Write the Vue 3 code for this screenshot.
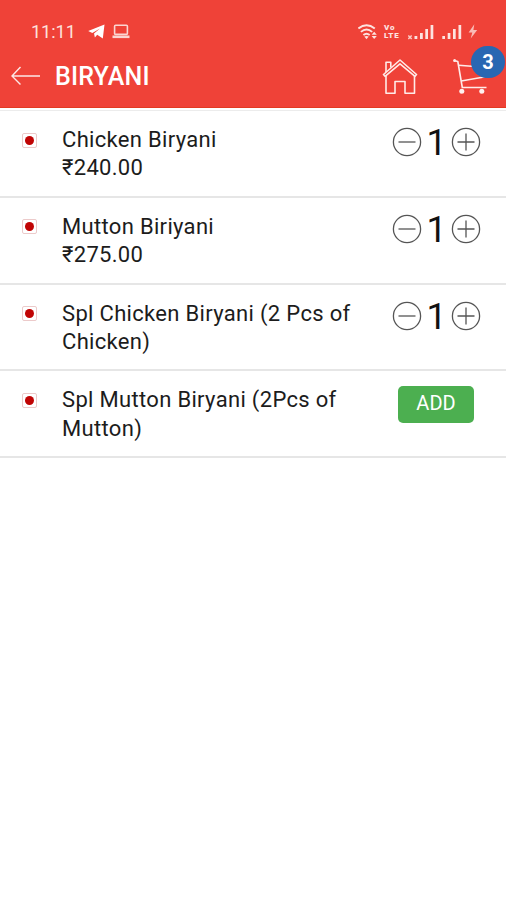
<script setup>
import { ref } from 'vue'

const items = ref([
  { name: 'Chicken Biryani', price: '₹240.00', qty: 1 },
  { name: 'Mutton Biriyani', price: '₹275.00', qty: 1 },
  { name: 'Spl Chicken Biryani (2 Pcs of Chicken)', price: '', qty: 1 },
  { name: 'Spl Mutton Biryani (2Pcs of Mutton)', price: '', qty: 0 },
])
</script>

<template>
  <div class="screen">
    <header class="header">
      <div class="status">
        <span class="time">11:11</span>
        <svg class="plane" width="18" height="15" viewBox="0 0 18 15">
          <path d="M.2 7 16.5 .5 14.8 14.5 9.2 10.8 6.9 13.4 6 9.6 12 4.5 4.3 9Z" fill="#fff" />
        </svg>
        <svg class="laptop" width="18" height="15" viewBox="0 0 18 15">
          <rect x="2.6" y="1.2" width="12.8" height="9.2" rx="1" fill="none" stroke="#fbd5d1" stroke-width="1.6" />
          <path d="M.5 12.8H17.5" stroke="#fbd5d1" stroke-width="2.6" />
        </svg>
        <span class="spacer"></span>
        <svg class="wifi" width="20" height="16" viewBox="0 0 20 16">
          <g fill="none" stroke="#fde3e0" stroke-width="1.9">
            <path d="M.4 4.5Q8.5 -2 16.8 4.5" />
            <path d="M2.9 7.9Q8.5 3 14.2 7.9" />
            <path d="M5.4 11.1Q8.5 8.5 11.7 11.1" />
          </g>
          <path d="M6.3 12.6Q8.5 11.2 10.7 12.6L8.5 15.2Z" fill="#fde3e0" />
          <path d="M13.6 10.8 16.2 7.8 18.8 10.8ZM13.6 12 16.2 15 18.8 12Z" fill="#fde3e0" />
        </svg>
        <span class="volte"><span>Vo</span><span>LTE</span></span>
        <svg class="bars" width="26" height="16" viewBox="0 0 26 16">
          <path d="M.3 11.5 3.7 15M3.7 11.5.3 15" stroke="#fbc9c4" stroke-width="1.5" />
          <path d="M6.5 12H9.3V15H6.5ZM12 9H14.8V15H12ZM17.3 5H20V15H17.3ZM22.6 1H25.3V15H22.6Z" fill="#fde3e0" />
        </svg>
        <svg class="bars2" width="20" height="16" viewBox="0 0 20 16">
          <path d="M.3 12H3V15H.3ZM5.7 9H8.4V15H5.7ZM11 5H13.7V15H11ZM16.5 1H19.2V15H16.5Z" fill="#fde3e0" />
        </svg>
        <svg class="bolt" width="10" height="15" viewBox="0 0 10 15">
          <path d="M6.3.3.6 8.4H4.3L2.7 14.6 9.2 6H5.4Z" fill="#f9bbb5" />
        </svg>
      </div>
      <div class="bar">
        <svg class="back" width="30" height="20" viewBox="0 0 30 20">
          <path d="M9.5 1 1 10 9.5 18.5M1 10H29" fill="none" stroke="#fde8e6" stroke-width="1.4" />
        </svg>
        <h1 class="title">BIRYANI</h1>
        <span class="spacer"></span>
        <svg class="home" width="36" height="36" viewBox="0 0 36 36">
          <g fill="none" stroke="#ffebe8" stroke-width="1.6" stroke-linejoin="round">
            <path d="M1.5 15.5 18 1 34.5 15.5 33 17.3 18 4.8 3 17.3Z" />
            <path d="M4 13V3.2H8.8V8.5" />
            <path d="M4 17V34.2H13V22.5H23V34.2H32.5V17" />
          </g>
        </svg>
        <div class="cart">
          <svg width="36" height="36" viewBox="0 0 36 36">
            <g fill="none" stroke="#ffebe8" stroke-width="1.6" stroke-linejoin="round">
              <path d="M1 1.5 4.8 2.5 9.3 28.5H33.5" />
              <path d="M5.6 6.3 35 8.5 31 18 8.2 22" />
            </g>
            <circle cx="1.6" cy="1.6" r="1.5" fill="#ffebe8" />
            <circle cx="8.8" cy="32.2" r="2.5" fill="#fff0ee" />
            <circle cx="28.8" cy="32.2" r="2.5" fill="#fff0ee" />
          </svg>
          <span class="badge">3</span>
        </div>
      </div>
    </header>

    <main class="list">
      <section v-for="item in items" :key="item.name" class="row">
        <span class="mark"><i></i></span>
        <div class="info">
          <div>{{ item.name }}</div>
          <div v-if="item.price">{{ item.price }}</div>
        </div>
        <div v-if="item.qty" class="stepper">
          <svg width="30" height="30" viewBox="0 0 30 30" @click="item.qty--">
            <circle cx="15" cy="15" r="13.6" />
            <path d="M6.5 15H23.5" />
          </svg>
          <span class="qty">{{ item.qty }}</span>
          <svg width="30" height="30" viewBox="0 0 30 30" @click="item.qty++">
            <circle cx="15" cy="15" r="13.6" />
            <path d="M6.5 15H23.5M15 6.5V23.5" />
          </svg>
        </div>
        <button v-else class="add" @click="item.qty++">ADD</button>
      </section>
    </main>
  </div>
</template>

<style>
body {
  margin: 0;
  background: #fff;
}
</style>

<style scoped>
.screen {
  width: 506px;
  height: 900px;
  overflow: hidden;
  background: #fff;
  font-family: Roboto, "Liberation Sans", sans-serif;
  color: #1c1c1c;
}
svg {
  display: block;
  flex: none;
}
.header {
  box-sizing: border-box;
  height: 108px;
  padding-top: 20px;
  background: #ef4238;
  border-bottom: 1px solid #e23a22;
}
.status {
  display: flex;
  align-items: center;
  height: 23px;
  padding: 0 28px 0 31px;
}
.time {
  width: 57px;
  font-size: 18px;
  line-height: 23px;
  color: #fde0dd;
}
.laptop {
  margin-left: 6px;
}
.spacer {
  flex: 1;
}
.volte {
  display: flex;
  flex-direction: column;
  width: 18px;
  margin: 0 6px;
  font-size: 8px;
  font-weight: 900;
  line-height: 8px;
  letter-spacing: 0.8px;
  color: #fde3e0;
}
.bars2 {
  margin-left: 8px;
}
.bolt {
  margin-left: 6px;
}
.bar {
  display: flex;
  align-items: center;
  height: 67px;
  padding: 0 17px 0 11px;
}
.back {
  margin-bottom: 1px;
}
.title {
  margin: 0 0 0 14px;
  font-size: 25px;
  font-weight: 500;
  line-height: 30px;
  letter-spacing: 0.2px;
  color: #fff;
}
.cart {
  position: relative;
  margin-left: 35px;
}
.badge {
  position: absolute;
  top: -13px;
  left: 18px;
  width: 34px;
  height: 32px;
  border-radius: 16px;
  background: #2867b2;
  color: #fff;
  font-size: 20px;
  font-weight: 700;
  line-height: 32px;
  text-align: center;
}
.list {
  border-top: 1px solid #ececec;
  margin-top: 2px;
}
.row {
  box-sizing: border-box;
  display: flex;
  align-items: flex-start;
  height: 86.75px;
  padding: 15px 25px 0 22px;
  border-bottom: 2px solid #e6e6e6;
}
.mark {
  box-sizing: border-box;
  display: flex;
  flex: none;
  align-items: center;
  justify-content: center;
  width: 15px;
  height: 15px;
  margin-top: 6.5px;
  border: 1px solid #eccaca;
  border-radius: 2px;
}
.mark i {
  width: 9px;
  height: 9px;
  border-radius: 50%;
  background: #c00404;
}
.info {
  width: 305px;
  margin-left: 25px;
  font-size: 22px;
  line-height: 28.4px;
  letter-spacing: 0.32px;
}
.stepper {
  display: flex;
  align-items: center;
  height: 32px;
  margin: 0 0 0 auto;
}
.stepper svg {
  fill: none;
  stroke: #555;
  stroke-width: 1.3;
}
.qty {
  width: 29px;
  padding-top: 2px;
  font-size: 36px;
  line-height: 32px;
  text-align: center;
  color: #111;
}
.add {
  width: 76px;
  height: 37px;
  margin: 0 7px 0 auto;
  padding: 0 0 2px;
  border: 0;
  border-radius: 5px;
  background: #4caf50;
  color: #fff;
  font-family: inherit;
  font-size: 20px;
  line-height: 35px;
}
</style>
